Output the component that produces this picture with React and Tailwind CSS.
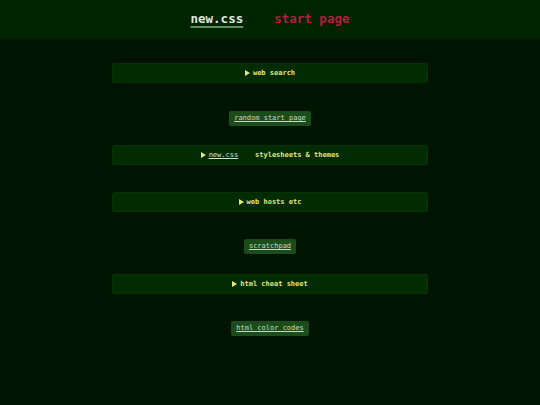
const mono = { fontFamily: '"DejaVu Sans Mono", "Liberation Mono", monospace' };

function Arrow() {
  return (
    <svg width="5" height="6" viewBox="0 0 5 6" className="block mr-[3px]">
      <path d="M0 0 L5 3 L0 6 Z" fill="#e6e67a" />
    </svg>
  );
}

function Bar({ children, className = '' }) {
  return (
    <div
      className={`h-[20px] w-full flex items-center justify-center rounded-[2px] border border-[#063206] bg-[#012b01] text-[7px] font-bold text-[#e6e67a] ${className}`}
    >
      <Arrow />
      <span className="whitespace-pre">{children}</span>
    </div>
  );
}

function Btn({ children, className = '' }) {
  return (
    <div className={`flex justify-center ${className}`}>
      <a className="h-[15px] px-[5px] flex items-center rounded-[2px] bg-[#1b4d1b] text-[7px] text-[#c9d9c9] underline underline-offset-[1px] whitespace-pre">
        {children}
      </a>
    </div>
  );
}

export default function App() {
  return (
    <div className="w-[540px] h-[405px] bg-[#011401] overflow-hidden" style={mono}>
      <header className="h-[40px] bg-[#002300] border-b border-[#001a00] flex items-center justify-center gap-[31px] text-[12.5px] font-bold">
        <span className="text-[#dfe8df] underline decoration-[#5f8f5f] decoration-[2px] underline-offset-[3px]">new.css</span>
        <span className="text-[#b51e3c]">start page</span>
      </header>
      <main className="w-[316px] mx-auto pt-[23px]">
        <Bar>web search</Bar>
        <Btn className="mt-[28px]">random start page</Btn>
        <Bar className="mt-[19px]">
          <span className="text-[#d5e0d5] font-normal underline underline-offset-[1px]">new.css</span>
          {'    stylesheets & themes'}
        </Bar>
        <Bar className="mt-[27px]">web hosts etc</Bar>
        <Btn className="mt-[27px]">scratchpad</Btn>
        <Bar className="mt-[20px]">html cheat sheet</Bar>
        <Btn className="mt-[27px]">html color codes</Btn>
      </main>
    </div>
  );
}
